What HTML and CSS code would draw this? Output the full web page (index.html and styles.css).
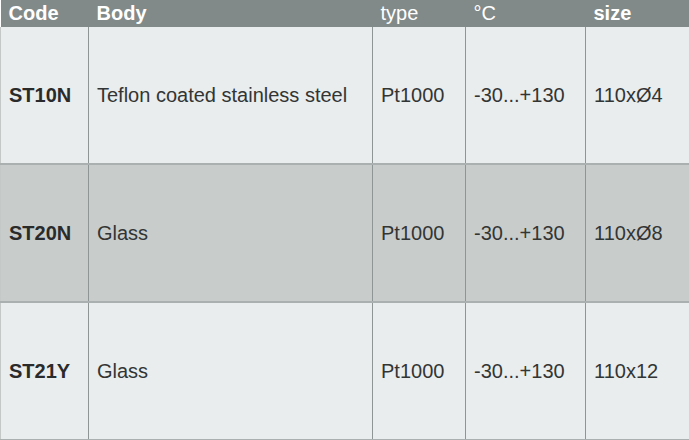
FILE: index.html
```html
<!DOCTYPE html>
<html>
<head>
<meta charset="utf-8">
<link rel="stylesheet" href="styles.css">
</head>
<body>
<table class="spec">
  <colgroup>
    <col class="c-code"><col class="c-body"><col class="c-type"><col class="c-temp"><col class="c-size">
  </colgroup>
  <thead>
    <tr>
      <th class="b">Code</th>
      <th class="b">Body</th>
      <th>type</th>
      <th>°C</th>
      <th class="b">size</th>
    </tr>
  </thead>
  <tbody>
    <tr class="light">
      <td class="code">ST10N</td>
      <td>Teflon coated stainless steel</td>
      <td>Pt1000</td>
      <td>-30...+130</td>
      <td>110xØ4</td>
    </tr>
    <tr class="dark">
      <td class="code">ST20N</td>
      <td>Glass</td>
      <td>Pt1000</td>
      <td>-30...+130</td>
      <td>110xØ8</td>
    </tr>
    <tr class="light">
      <td class="code">ST21Y</td>
      <td>Glass</td>
      <td>Pt1000</td>
      <td>-30...+130</td>
      <td>110x12</td>
    </tr>
  </tbody>
</table>
</body>
</html>
```

FILE: styles.css
```css
html, body {
  margin: 0;
  padding: 0;
  background: #ffffff;
}
.spec {
  width: 689px;
  table-layout: fixed;
  border-collapse: collapse;
  font-family: "Liberation Sans", Arial, sans-serif;
  font-size: 20px;
}
.c-code { width: 88px; }
.c-body { width: 284px; }
.c-type { width: 93px; }
.c-temp { width: 120px; }
.c-size { width: 104px; }
.spec th {
  background: #828a89;
  color: #ffffff;
  font-weight: normal;
  text-align: left;
  height: 27px;
  padding: 0 0 0 8px;
  line-height: 27px;
  white-space: nowrap;
}
.spec th.b { font-weight: bold; }
.spec td {
  height: 136px;
  padding: 0 0 0 8px;
  color: #333535;
  border-left: 1px solid #8e9695;
  border-bottom: 2px solid #a9b0af;
  white-space: nowrap;
}
.spec td:first-child { border-left: 1px solid #c4c9c8; }
.spec td:last-child { border-right: 1px solid #b5bbba; }
.spec td.code { font-weight: bold; color: #2a2a2a; }
.light td { background: #e9eded; }
.dark td { background: #c8cdcc; }
```
